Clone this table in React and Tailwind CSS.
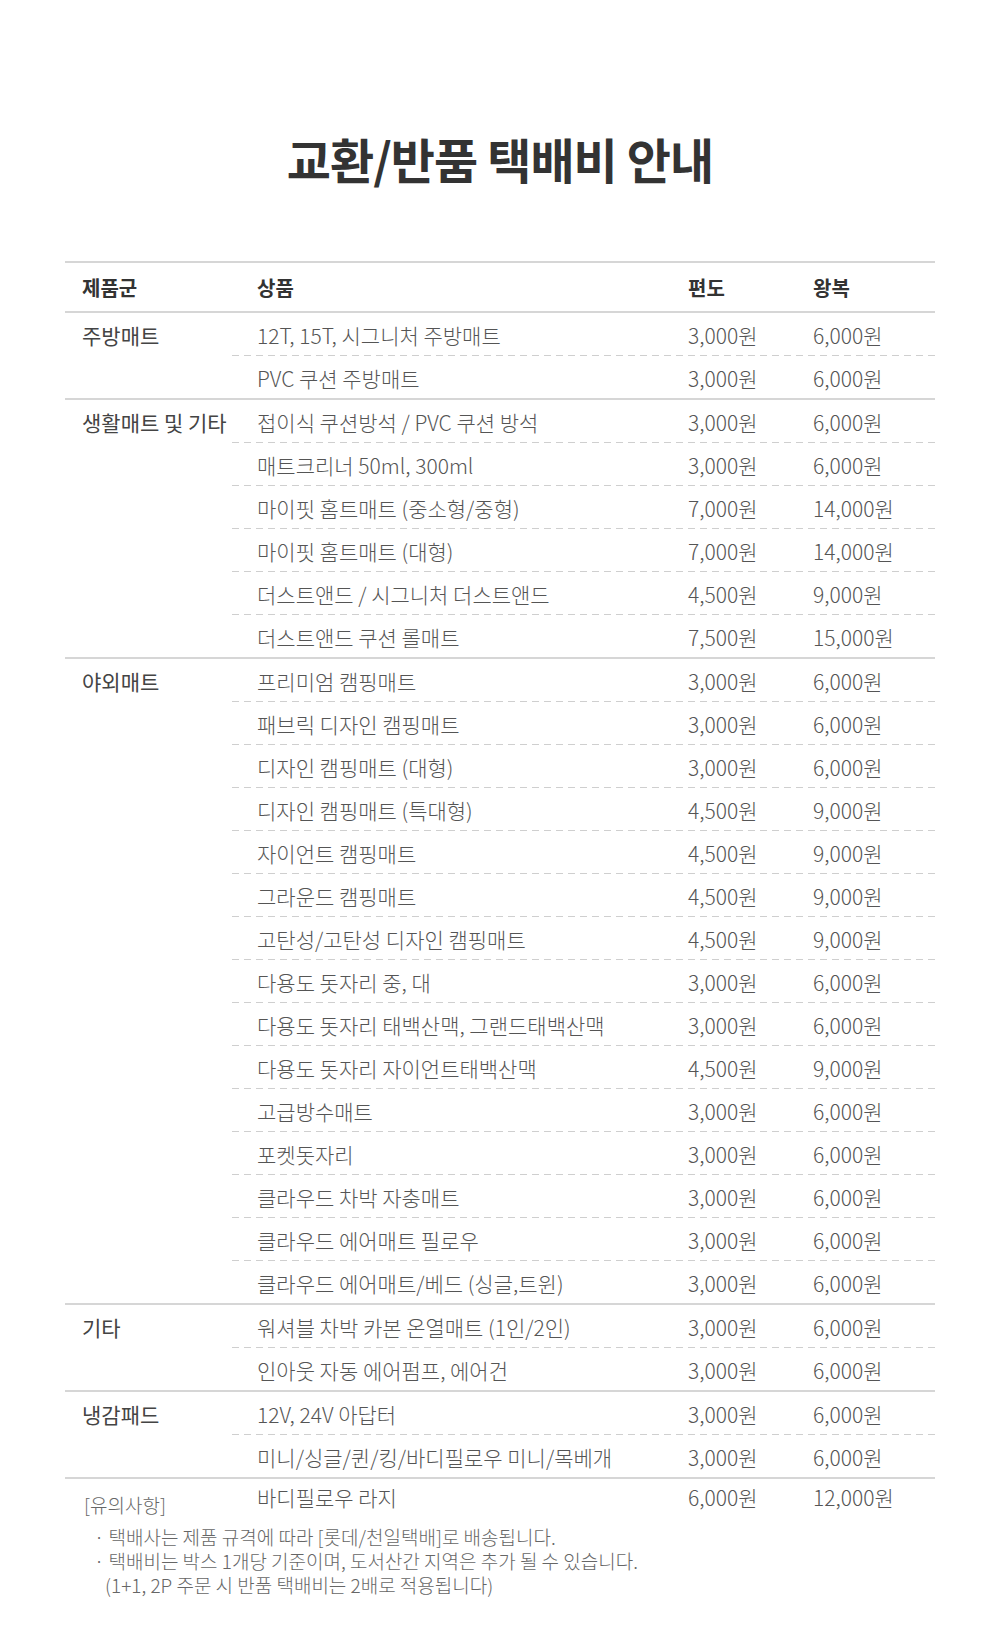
import React from "react";

const groups = [
  {
    label: "주방매트",
    rows: [
      ["12T, 15T, 시그니처 주방매트", "3,000원", "6,000원"],
      ["PVC 쿠션 주방매트", "3,000원", "6,000원"],
    ],
  },
  {
    label: "생활매트 및 기타",
    rows: [
      ["접이식 쿠션방석 / PVC 쿠션 방석", "3,000원", "6,000원"],
      ["매트크리너 50ml, 300ml", "3,000원", "6,000원"],
      ["마이핏 홈트매트 (중소형/중형)", "7,000원", "14,000원"],
      ["마이핏 홈트매트 (대형)", "7,000원", "14,000원"],
      ["더스트앤드 / 시그니처 더스트앤드", "4,500원", "9,000원"],
      ["더스트앤드 쿠션 롤매트", "7,500원", "15,000원"],
    ],
  },
  {
    label: "야외매트",
    rows: [
      ["프리미엄 캠핑매트", "3,000원", "6,000원"],
      ["패브릭 디자인 캠핑매트", "3,000원", "6,000원"],
      ["디자인 캠핑매트 (대형)", "3,000원", "6,000원"],
      ["디자인 캠핑매트 (특대형)", "4,500원", "9,000원"],
      ["자이언트 캠핑매트", "4,500원", "9,000원"],
      ["그라운드 캠핑매트", "4,500원", "9,000원"],
      ["고탄성/고탄성 디자인 캠핑매트", "4,500원", "9,000원"],
      ["다용도 돗자리 중, 대", "3,000원", "6,000원"],
      ["다용도 돗자리 태백산맥, 그랜드태백산맥", "3,000원", "6,000원"],
      ["다용도 돗자리 자이언트태백산맥", "4,500원", "9,000원"],
      ["고급방수매트", "3,000원", "6,000원"],
      ["포켓돗자리", "3,000원", "6,000원"],
      ["클라우드 차박 자충매트", "3,000원", "6,000원"],
      ["클라우드 에어매트 필로우", "3,000원", "6,000원"],
      ["클라우드 에어매트/베드 (싱글,트윈)", "3,000원", "6,000원"],
    ],
  },
  {
    label: "기타",
    rows: [
      ["워셔블 차박 카본 온열매트 (1인/2인)", "3,000원", "6,000원"],
      ["인아웃 자동 에어펌프, 에어건", "3,000원", "6,000원"],
    ],
  },
  {
    label: "냉감패드",
    rows: [
      ["12V, 24V 아답터", "3,000원", "6,000원"],
      ["미니/싱글/퀸/킹/바디필로우 미니/목베개", "3,000원", "6,000원"],
    ],
  },
];

function Row({ cells }) {
  return (
    <div className="grid grid-cols-[431px_125px_1fr] h-[42px] pt-[4px] items-center">
      <div className="pl-[25px]">{cells[0]}</div>
      <div className="pl-[25px]">{cells[1]}</div>
      <div className="pl-[25px]">{cells[2]}</div>
    </div>
  );
}

function Dash() {
  return (
    <div className="h-px bg-[repeating-linear-gradient(to_right,#cfcfcf_0px,#cfcfcf_7px,transparent_7px,transparent_12px)]" />
  );
}

export default function App() {
  return (
    <div className="w-[1000px] h-[1640px] bg-white font-['Noto_Sans_CJK_KR','Noto_Sans',sans-serif] text-[#555] overflow-hidden">
      <h1 className="mt-[128px] h-[60px] leading-[60px] text-center text-[48px] font-bold text-[#333] tracking-[-0.02em]">
        교환/반품 택배비 안내
      </h1>
      <div className="mx-[65px] mt-[73px] border-t-2 border-[#d6d6d6] text-[21px] font-light">
        <div className="grid grid-cols-[167px_431px_125px_1fr] h-[50px] pt-[2px] items-center border-b-2 border-[#d6d6d6] font-bold text-[#333] text-[20px]">
          <div className="pl-[17px]">제품군</div>
          <div className="pl-[25px]">상품</div>
          <div className="pl-[25px]">편도</div>
          <div className="pl-[25px]">왕복</div>
        </div>
        {groups.map((g) => (
          <div key={g.label} className="flex border-b-2 border-[#d6d6d6]">
            <div className="w-[167px] shrink-0 pl-[17px] h-[42px] pt-[4px] flex items-center font-normal text-[#444]">
              {g.label}
            </div>
            <div className="flex-1 flex flex-col">
              {g.rows.map((r, i) => (
                <React.Fragment key={i}>
                  {i > 0 && <Dash />}
                  <Row cells={r} />
                </React.Fragment>
              ))}
            </div>
          </div>
        ))}
        <div className="flex">
          <div className="w-[167px] shrink-0" />
          <div className="flex-1 grid grid-cols-[431px_125px_1fr] h-[38px] items-center">
            <div className="pl-[25px]">바디필로우 라지</div>
            <div className="pl-[25px]">6,000원</div>
            <div className="pl-[25px]">12,000원</div>
          </div>
        </div>
      </div>
      <div className="mx-[65px] -mt-[24px] text-[19px] font-light text-[#666] leading-[24px]">
        <div className="pl-[19px] h-[24px]">[유의사항]</div>
        <div className="pl-[29px] mt-[8px]">
          <div>· 택배사는 제품 규격에 따라 [롯데/천일택배]로 배송됩니다.</div>
          <div>· 택배비는 박스 1개당 기준이며, 도서산간 지역은 추가 될 수 있습니다.</div>
          <div className="pl-[11px]">(1+1, 2P 주문 시 반품 택배비는 2배로 적용됩니다)</div>
        </div>
      </div>
    </div>
  );
}
